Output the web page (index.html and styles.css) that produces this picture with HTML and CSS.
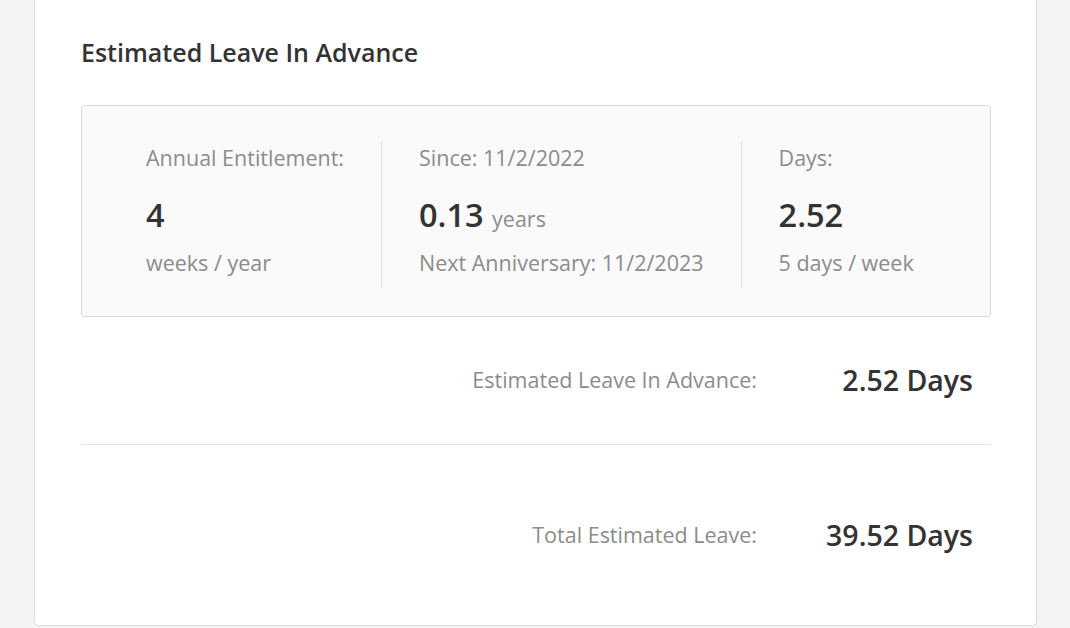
FILE: index.html
```html
<!DOCTYPE html>
<html>
<head>
<meta charset="utf-8">
<link rel="stylesheet" href="styles.css">
</head>
<body>
<div class="card">
  <h2 class="title">Estimated Leave In Advance</h2>
  <div class="stats">
    <div class="stat">
      <div class="label">Annual Entitlement:</div>
      <div class="value">4</div>
      <div class="sub">weeks / year</div>
    </div>
    <div class="stat">
      <div class="label">Since: 11/2/2022</div>
      <div class="value">0.13 <span class="unit">years</span></div>
      <div class="sub">Next Anniversary: 11/2/2023</div>
    </div>
    <div class="stat">
      <div class="label">Days:</div>
      <div class="value">2.52</div>
      <div class="sub">5 days / week</div>
    </div>
  </div>
  <div class="row first">
    <div class="row-label">Estimated Leave In Advance:</div>
    <div class="row-value">2.52 Days</div>
  </div>
  <div class="row total">
    <div class="row-label">Total Estimated Leave:</div>
    <div class="row-value">39.52 Days</div>
  </div>
</div>
</body>
</html>
```
FILE: styles.css
```css
html, body {
  margin: 0;
  padding: 0;
}
body {
  background: #f3f3f3;
  font-family: "Open Sans", "Noto Sans", sans-serif;
  color: #333;
  height: 628px;
  overflow: hidden;
}
.card {
  margin-left: 34px;
  width: 955px;
  background: #fff;
  border: 1px solid #dedede;
  border-top: none;
  border-radius: 0 0 5px 5px;
  padding: 36px 0 70px 46px;
}
.title {
  margin: 0;
  font-size: 25px;
  line-height: 32px;
  font-weight: 600;
  color: #333;
}
.stats {
  margin-top: 37px;
  background: #fafafa;
  border: 1px solid #dcdcdc;
  border-radius: 3px;
  display: flex;
  padding: 36px 0 28px 27px;
  box-sizing: border-box;
  width: 910px;
}
.stat {
  padding: 0 37px 9px;
}
.stat + .stat {
  border-left: 1px solid #dcdcdc;
}
.label, .sub {
  font-size: 21.5px;
  line-height: 32px;
  color: #8c8c8c;
}
.value {
  font-size: 32.5px;
  font-weight: 600;
  line-height: 40px;
  margin: 21px 0 12px;
  color: #333;
}
.unit {
  font-size: 21.5px;
  font-weight: 400;
  line-height: 1;
  color: #8c8c8c;
}
.row {
  display: grid;
  grid-template-columns: 1fr 234px;
  align-items: center;
  width: 910px;
  line-height: 40px;
}
.row.first {
  margin-top: 43px;
  padding-bottom: 44px;
  border-bottom: 1px solid #e3e3e3;
}
.row.total {
  margin-top: 70px;
}
.row-label {
  text-align: right;
  font-size: 21.5px;
  color: #8c8c8c;
}
.row-value {
  text-align: right;
  padding-right: 18px;
  font-size: 28.5px;
  font-weight: 600;
  color: #333;
}
```
